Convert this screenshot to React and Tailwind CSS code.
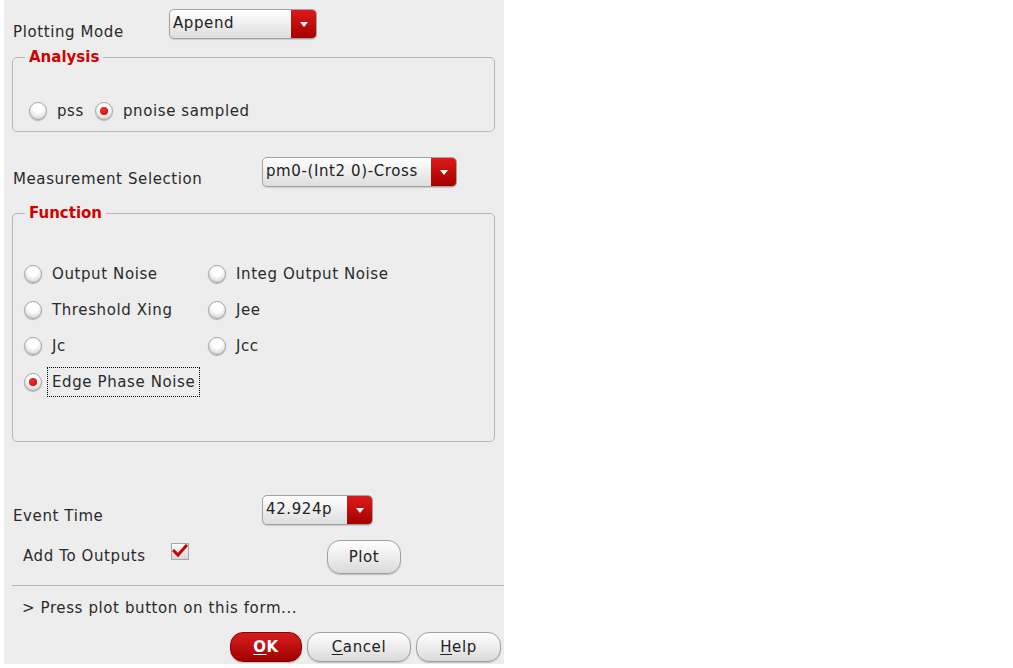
import React from 'react';

const FONT = { fontFamily: '"DejaVu Sans", "Liberation Sans", sans-serif' };

function Radio({ checked }) {
  return (
    <span className="relative inline-flex h-[18px] w-[18px] shrink-0 items-center justify-center rounded-full border border-[#a8a8a8] bg-[radial-gradient(circle_at_50%_30%,#ffffff_35%,#e2e2e2_70%,#b5b5b5_100%)] shadow-[0_1px_1px_rgba(0,0,0,0.25)]">
      {checked && <span className="h-[8px] w-[8px] rounded-full bg-[radial-gradient(circle_at_40%_35%,#ff3030,#c00000)]" />}
    </span>
  );
}

function RadioItem({ label, checked, focused, className = '' }) {
  return (
    <div className={`flex items-center ${className}`}>
      <Radio checked={checked} />
      <span
        className={`ml-[5px] px-[4px] leading-[28px] ${focused ? 'border border-dotted border-black' : 'border border-transparent'}`}
      >
        {label}
      </span>
    </div>
  );
}

function Combo({ value, width }) {
  return (
    <div
      className="flex h-[30px] overflow-hidden rounded-[5px] border border-[#a2a2a2] bg-linear-to-b from-white to-[#dedede] shadow-[0_1px_1px_rgba(0,0,0,0.15)]"
      style={{ width }}
    >
      <span className="flex-1 pl-[3px] pt-[2px] leading-[22px] text-[#222]">{value}</span>
      <span className="flex w-[25px] items-center justify-center bg-linear-to-b from-[#dd1a1a] to-[#a50000]">
        <span className="h-0 w-0 border-x-[4px] border-t-[5px] border-x-transparent border-t-white" />
      </span>
    </div>
  );
}

function Button({ children, width, height = 30, primary }) {
  return (
    <button
      className={`flex items-center justify-center rounded-[13px] border text-[15px] shadow-[0_1px_1px_rgba(0,0,0,0.2)] ${
        primary
          ? 'border-[#8a0000] bg-linear-to-b from-[#d81c1c] to-[#a20000] font-bold text-white'
          : 'border-[#a0a0a0] bg-linear-to-b from-white to-[#dadada] text-[#222]'
      }`}
      style={{ width, height }}
    >
      {children}
    </button>
  );
}

function Group({ title, height, children }) {
  return (
    <div className="relative ml-[8px] w-[483px] rounded-[5px] border border-[#b8b8b8]" style={{ height }}>
      <span className="absolute left-[12px] top-[-11px] bg-[#ededed] px-[4px] text-[15px] font-bold leading-[20px] tracking-normal text-[#d40000]">
        {title}
      </span>
      {children}
    </div>
  );
}

export default function App() {
  return (
    <div className="h-[668px] w-full bg-white" style={FONT}>
      <div className="ml-[4px] flex h-[664px] w-[500px] flex-col bg-[#ededed] text-[15px] tracking-[0.6px] text-[#2a2a2a]">
        <div className="mt-[9px] flex h-[30px] items-end">
          <span className="ml-[9px] mb-[-3px] w-[156px] leading-[20px]">Plotting Mode</span>
          <Combo value="Append" width={148} />
        </div>

        <div className="mt-[18px]">
          <Group title="Analysis" height={75}>
            <div className="ml-[16px] mt-[38px] flex items-center">
              <RadioItem label="pss" />
              <RadioItem label="pnoise sampled" checked className="ml-[6px]" />
            </div>
          </Group>
        </div>

        <div className="mt-[25px] flex h-[30px] items-end">
          <span className="ml-[9px] mb-[-2px] w-[249px] leading-[20px]">Measurement Selection</span>
          <Combo value="pm0-(Int2 0)-Cross" width={195} />
        </div>

        <div className="mt-[26px]">
          <Group title="Function" height={229}>
            <div className="ml-[11px] mt-[45px] grid grid-cols-[184px_1fr] gap-y-[6px]">
              <RadioItem label="Output Noise" />
              <RadioItem label="Integ Output Noise" />
              <RadioItem label="Threshold Xing" />
              <RadioItem label="Jee" />
              <RadioItem label="Jc" />
              <RadioItem label="Jcc" />
              <RadioItem label="Edge Phase Noise" checked focused />
            </div>
          </Group>
        </div>

        <div className="mt-[53px] flex h-[30px] items-end">
          <span className="ml-[9px] mb-[-1px] w-[249px] leading-[20px]">Event Time</span>
          <Combo value="42.924p" width={111} />
        </div>

        <div className="mt-[15px] flex h-[34px] items-center">
          <span className="ml-[19px] mt-[-2px] w-[148px]">Add To Outputs</span>
          <span className="mb-[12px] flex h-[17px] w-[18px] items-center justify-center border border-[#a8a8a8] bg-linear-to-b from-white to-[#d8d8d8]">
            <svg width="16" height="14" viewBox="0 0 16 14">
              <path d="M2 7 L6 11 L14 2" fill="none" stroke="#cc0000" strokeWidth="3" strokeLinecap="square" />
            </svg>
          </span>
          <div className="ml-[138px]">
            <Button width={74} height={34}>Plot</Button>
          </div>
        </div>

        <div className="ml-[8px] mt-[11px] h-px w-[492px] bg-[#b4b4b4]" />

        <div className="ml-[18px] mt-[12px] leading-[20px]">&gt; Press plot button on this form...</div>

        <div className="mt-[14px] flex justify-end gap-[5px] pr-[3px]">
          <Button width={72} primary>
            <span className="underline underline-offset-2">O</span>K
          </Button>
          <Button width={104}>
            <span className="underline underline-offset-2">C</span>ancel
          </Button>
          <Button width={85}>
            <span className="underline underline-offset-2">H</span>elp
          </Button>
        </div>
      </div>
    </div>
  );
}
